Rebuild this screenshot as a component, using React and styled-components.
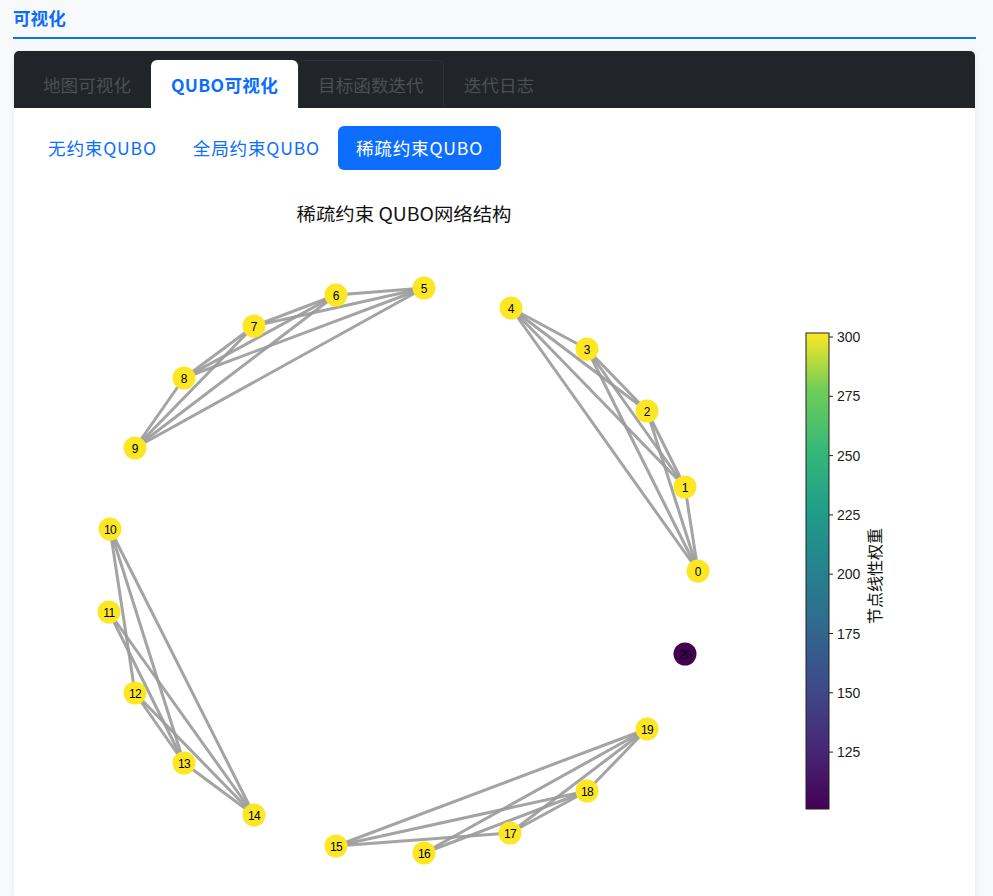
import React, { useState } from "react";
import styled, { createGlobalStyle } from "styled-components";

const GlobalStyle = createGlobalStyle`
  html, body {
    margin: 0;
    padding: 0;
    background: #f8f9fa;
    font-family: "Noto Sans CJK SC", "Noto Sans", sans-serif;
  }
`;

const tabs = ["地图可视化", "QUBO可视化", "目标函数迭代", "迭代日志"];
const pills = ["无约束QUBO", "全局约束QUBO", "稀疏约束QUBO"];

// node centers, page coordinates
const nodes = [
  [699, 570], [686, 486], [648, 410], [588, 348], [512, 307],
  [425, 287], [337, 294], [255, 325], [185, 377], [136, 447],
  [111, 528], [110, 611], [136, 692], [185, 762], [255, 814],
  [337, 845], [425, 852], [511, 832], [588, 790], [648, 728],
  [686, 653],
];

const full = (ids) => {
  const out = [];
  for (let i = 0; i < ids.length; i++)
    for (let j = i + 1; j < ids.length; j++) out.push([ids[i], ids[j]]);
  return out;
};

const edges = [
  ...full([0, 1, 2, 3, 4]),
  ...full([5, 6, 7, 8, 9]),
  [10, 12], [10, 13], [10, 14], [11, 13], [11, 14], [12, 13], [12, 14], [13, 14],
  [15, 17], [15, 18], [15, 19], [16, 18], [16, 19], [17, 18], [17, 19], [18, 19],
];

const ticks = [300, 275, 250, 225, 200, 175, 150, 125];
const BAR_TOP = 332;
const BAR_BOTTOM = 808;
const tickY = (v) => 336 + ((300 - v) / 25) * 59.3;

const Page = styled.div`
  padding: 0 17px 40px 13px;
`;

const Heading = styled.h2`
  margin: 0;
  padding: 6px 0 8px;
  font-size: 17.6px;
  line-height: 23px;
  font-weight: 700;
  color: #0d6efd;
  border-bottom: 2px solid #0d6efd;
`;

const Card = styled.div`
  margin: 12px 1px 0 1px;
  background: #fff;
  border-radius: 5px;
  box-shadow: 0 2px 6px rgba(0, 0, 0, 0.08);
  overflow: hidden;
`;

const TabBar = styled.div`
  display: flex;
  padding: 9px 9px 0;
  background: #212529;
`;

const Tab = styled.div`
  padding: 0 19px;
  height: 47px;
  line-height: 47px;
  font-size: 17.6px;
  letter-spacing: ${(p) => (p.$active ? "0.3px" : "0")};
  border: 1px solid ${(p) => (p.$hover ? "#2c3136" : "transparent")};
  border-bottom: 0;
  border-radius: 6px 6px 0 0;
  color: ${(p) => (p.$active ? "#0d6efd" : "#495057")};
  background: ${(p) => (p.$active ? "#fff" : "transparent")};
  font-weight: ${(p) => (p.$active ? 700 : 400)};
  cursor: pointer;
`;

const Body = styled.div`
  padding: 18px 16px 0;
`;

const Pills = styled.div`
  display: flex;
`;

const Pill = styled.div`
  padding: 8px 18px;
  font-size: 17.6px;
  line-height: 28px;
  letter-spacing: 0.8px;
  border-radius: 6px;
  color: ${(p) => (p.$active ? "#fff" : "#0d6efd")};
  background: ${(p) => (p.$active ? "#0d6efd" : "transparent")};
  cursor: pointer;
`;

const Chart = styled.svg`
  display: block;
  margin-top: 10px;
  font-family: "Liberation Sans", "Noto Sans CJK SC", sans-serif;
`;

export default function App() {
  const [tab, setTab] = useState(1);
  const [pill, setPill] = useState(2);

  return (
    <Page>
      <GlobalStyle />
      <Heading>可视化</Heading>
      <Card>
        <TabBar>
          {tabs.map((t, i) => (
            <Tab key={t} $active={i === tab} $hover={i === 2} onClick={() => setTab(i)}>
              {t}
            </Tab>
          ))}
        </TabBar>
        <Body>
          <Pills>
            {pills.map((p, i) => (
              <Pill key={p} $active={i === pill} onClick={() => setPill(i)}>
                {p}
              </Pill>
            ))}
          </Pills>
          <Chart width="927" height="720" viewBox="0 0 927 720">
            <defs>
              <linearGradient id="viridis" x1="0" y1="1" x2="0" y2="0">
                <stop offset="0" stopColor="#440154" />
                <stop offset="0.13" stopColor="#482878" />
                <stop offset="0.25" stopColor="#3e4989" />
                <stop offset="0.38" stopColor="#31688e" />
                <stop offset="0.5" stopColor="#26828e" />
                <stop offset="0.63" stopColor="#1f9e89" />
                <stop offset="0.75" stopColor="#35b779" />
                <stop offset="0.88" stopColor="#6ece58" />
                <stop offset="1" stopColor="#fde725" />
              </linearGradient>
            </defs>
            <g transform="translate(-31,-179)">
              <text
                x="405"
                y="220"
                textAnchor="middle"
                fontSize="18"
                textLength="215"
                lengthAdjust="spacingAndGlyphs"
                fill="#111"
                fontFamily='"Noto Sans CJK SC", sans-serif'
              >
                稀疏约束 QUBO网络结构
              </text>

              <g stroke="#9a9a9a" strokeOpacity="0.9" strokeWidth="3" strokeLinecap="round">
                {edges.map(([a, b]) => (
                  <line
                    key={`${a}-${b}`}
                    x1={nodes[a][0]}
                    y1={nodes[a][1]}
                    x2={nodes[b][0]}
                    y2={nodes[b][1]}
                  />
                ))}
              </g>

              {nodes.map(([x, y], i) => (
                <g key={i}>
                  <circle cx={x} cy={y} r="11.5" fill={i === 20 ? "#440154" : "#fde725"} />
                  <text
                    x={x}
                    y={y + 4.5}
                    textAnchor="middle"
                    fontSize="12"
                    fill="#000"
                    letterSpacing={i > 9 ? "-0.6" : "0"}
                  >
                    {i}
                  </text>
                </g>
              ))}

              <rect
                x="807"
                y={BAR_TOP}
                width="23"
                height={BAR_BOTTOM - BAR_TOP}
                fill="url(#viridis)"
                stroke="#222"
                strokeWidth="1"
              />
              {ticks.map((v) => (
                <g key={v}>
                  <line x1="830" y1={tickY(v)} x2="834" y2={tickY(v)} stroke="#222" strokeWidth="1" />
                  <text x="838" y={tickY(v) + 5} fontSize="14" fill="#222">
                    {v}
                  </text>
                </g>
              ))}
              <text
                transform="translate(882,575) rotate(-90)"
                textAnchor="middle"
                fontSize="16"
                fill="#111"
                fontFamily='"Noto Sans CJK SC", sans-serif'
              >
                节点线性权重
              </text>
            </g>
          </Chart>
        </Body>
      </Card>
    </Page>
  );
}
